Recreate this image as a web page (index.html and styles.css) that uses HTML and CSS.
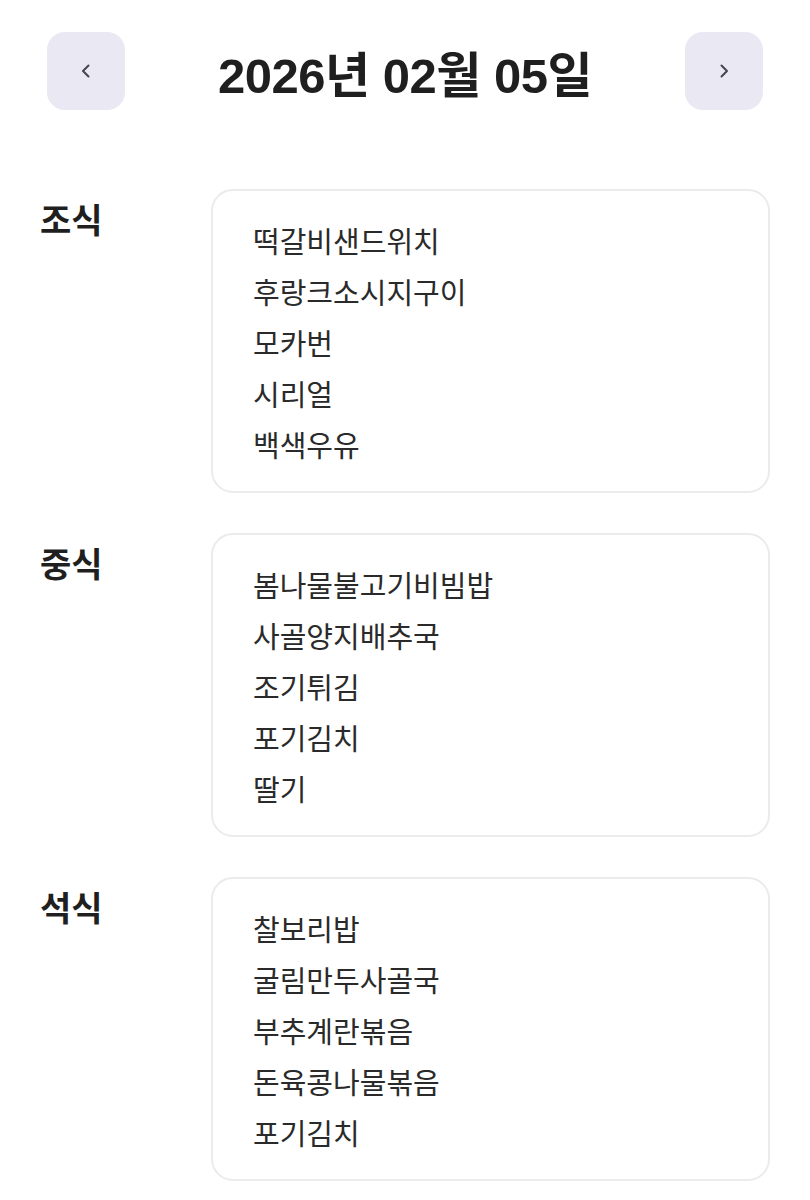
FILE: index.html
```html
<!DOCTYPE html>
<html lang="ko">
<head>
    <meta charset="UTF-8">
    <meta name="viewport" content="width=device-width, initial-scale=1.0">
    <title>급식 메뉴</title>
    <link rel="stylesheet" href="styles.css">
</head>
<body>

    <div class="page">
        <header class="date-bar">
            <button class="nav-btn" type="button" aria-label="이전 날짜">
                <svg width="16" height="16" viewBox="0 0 16 16"><path d="M10.5 2.5 L5 8 L10.5 13.5" fill="none" stroke="#45454f" stroke-width="2" stroke-linecap="round" stroke-linejoin="round"/></svg>
            </button>
            <h1 class="date-title">2026년 02월 05일</h1>
            <button class="nav-btn" type="button" aria-label="다음 날짜">
                <svg width="16" height="16" viewBox="0 0 16 16"><path d="M5.5 2.5 L11 8 L5.5 13.5" fill="none" stroke="#45454f" stroke-width="2" stroke-linecap="round" stroke-linejoin="round"/></svg>
            </button>
        </header>

        <section class="meal">
            <h2 class="meal-name">조식</h2>
            <ul class="meal-card">
                <li>떡갈비샌드위치</li>
                <li>후랑크소시지구이</li>
                <li>모카번</li>
                <li>시리얼</li>
                <li>백색우유</li>
            </ul>
        </section>

        <section class="meal">
            <h2 class="meal-name">중식</h2>
            <ul class="meal-card">
                <li>봄나물불고기비빔밥</li>
                <li>사골양지배추국</li>
                <li>조기튀김</li>
                <li>포기김치</li>
                <li>딸기</li>
            </ul>
        </section>

        <section class="meal">
            <h2 class="meal-name">석식</h2>
            <ul class="meal-card">
                <li>찰보리밥</li>
                <li>굴림만두사골국</li>
                <li>부추계란볶음</li>
                <li>돈육콩나물볶음</li>
                <li>포기김치</li>
            </ul>
        </section>
    </div>

</body>
</html>
```

FILE: styles.css
```css
body {
    margin: 0;
    font-family: "Liberation Sans", "Noto Sans CJK KR", sans-serif;
    background-color: #fff;
    color: #222;
}

.page {
    padding: 32px 40px 0;
}

.date-bar {
    display: flex;
    justify-content: space-between;
    align-items: center;
    padding: 0 7px;
}

.nav-btn {
    width: 78px;
    height: 78px;
    border: none;
    border-radius: 18px;
    background-color: #e9e8f3;
    display: flex;
    justify-content: center;
    align-items: center;
    padding: 0;
    cursor: pointer;
}

.date-title {
    margin: 0;
    font-size: 49px;
    font-weight: bold;
    color: #1f1f1f;
    letter-spacing: -0.5px;
}

.meal {
    display: grid;
    grid-template-columns: 171px 1fr;
    margin-top: 40px;
}

.date-bar + .meal {
    margin-top: 79px;
}

.meal-name {
    margin: 0;
    padding-top: 10px;
    font-family: "Noto Sans CJK KR", sans-serif;
    font-size: 34px;
    font-weight: bold;
    line-height: 40px;
    color: #1f1f1f;
}

.meal-card {
    list-style: none;
    margin: 0;
    padding: 24px 40px 21px;
    border: 2px solid #ebebeb;
    border-radius: 22px;
    font-family: "Noto Sans CJK KR", sans-serif;
    font-size: 29px;
    line-height: 51px;
    color: #2a2a2a;
}
```
